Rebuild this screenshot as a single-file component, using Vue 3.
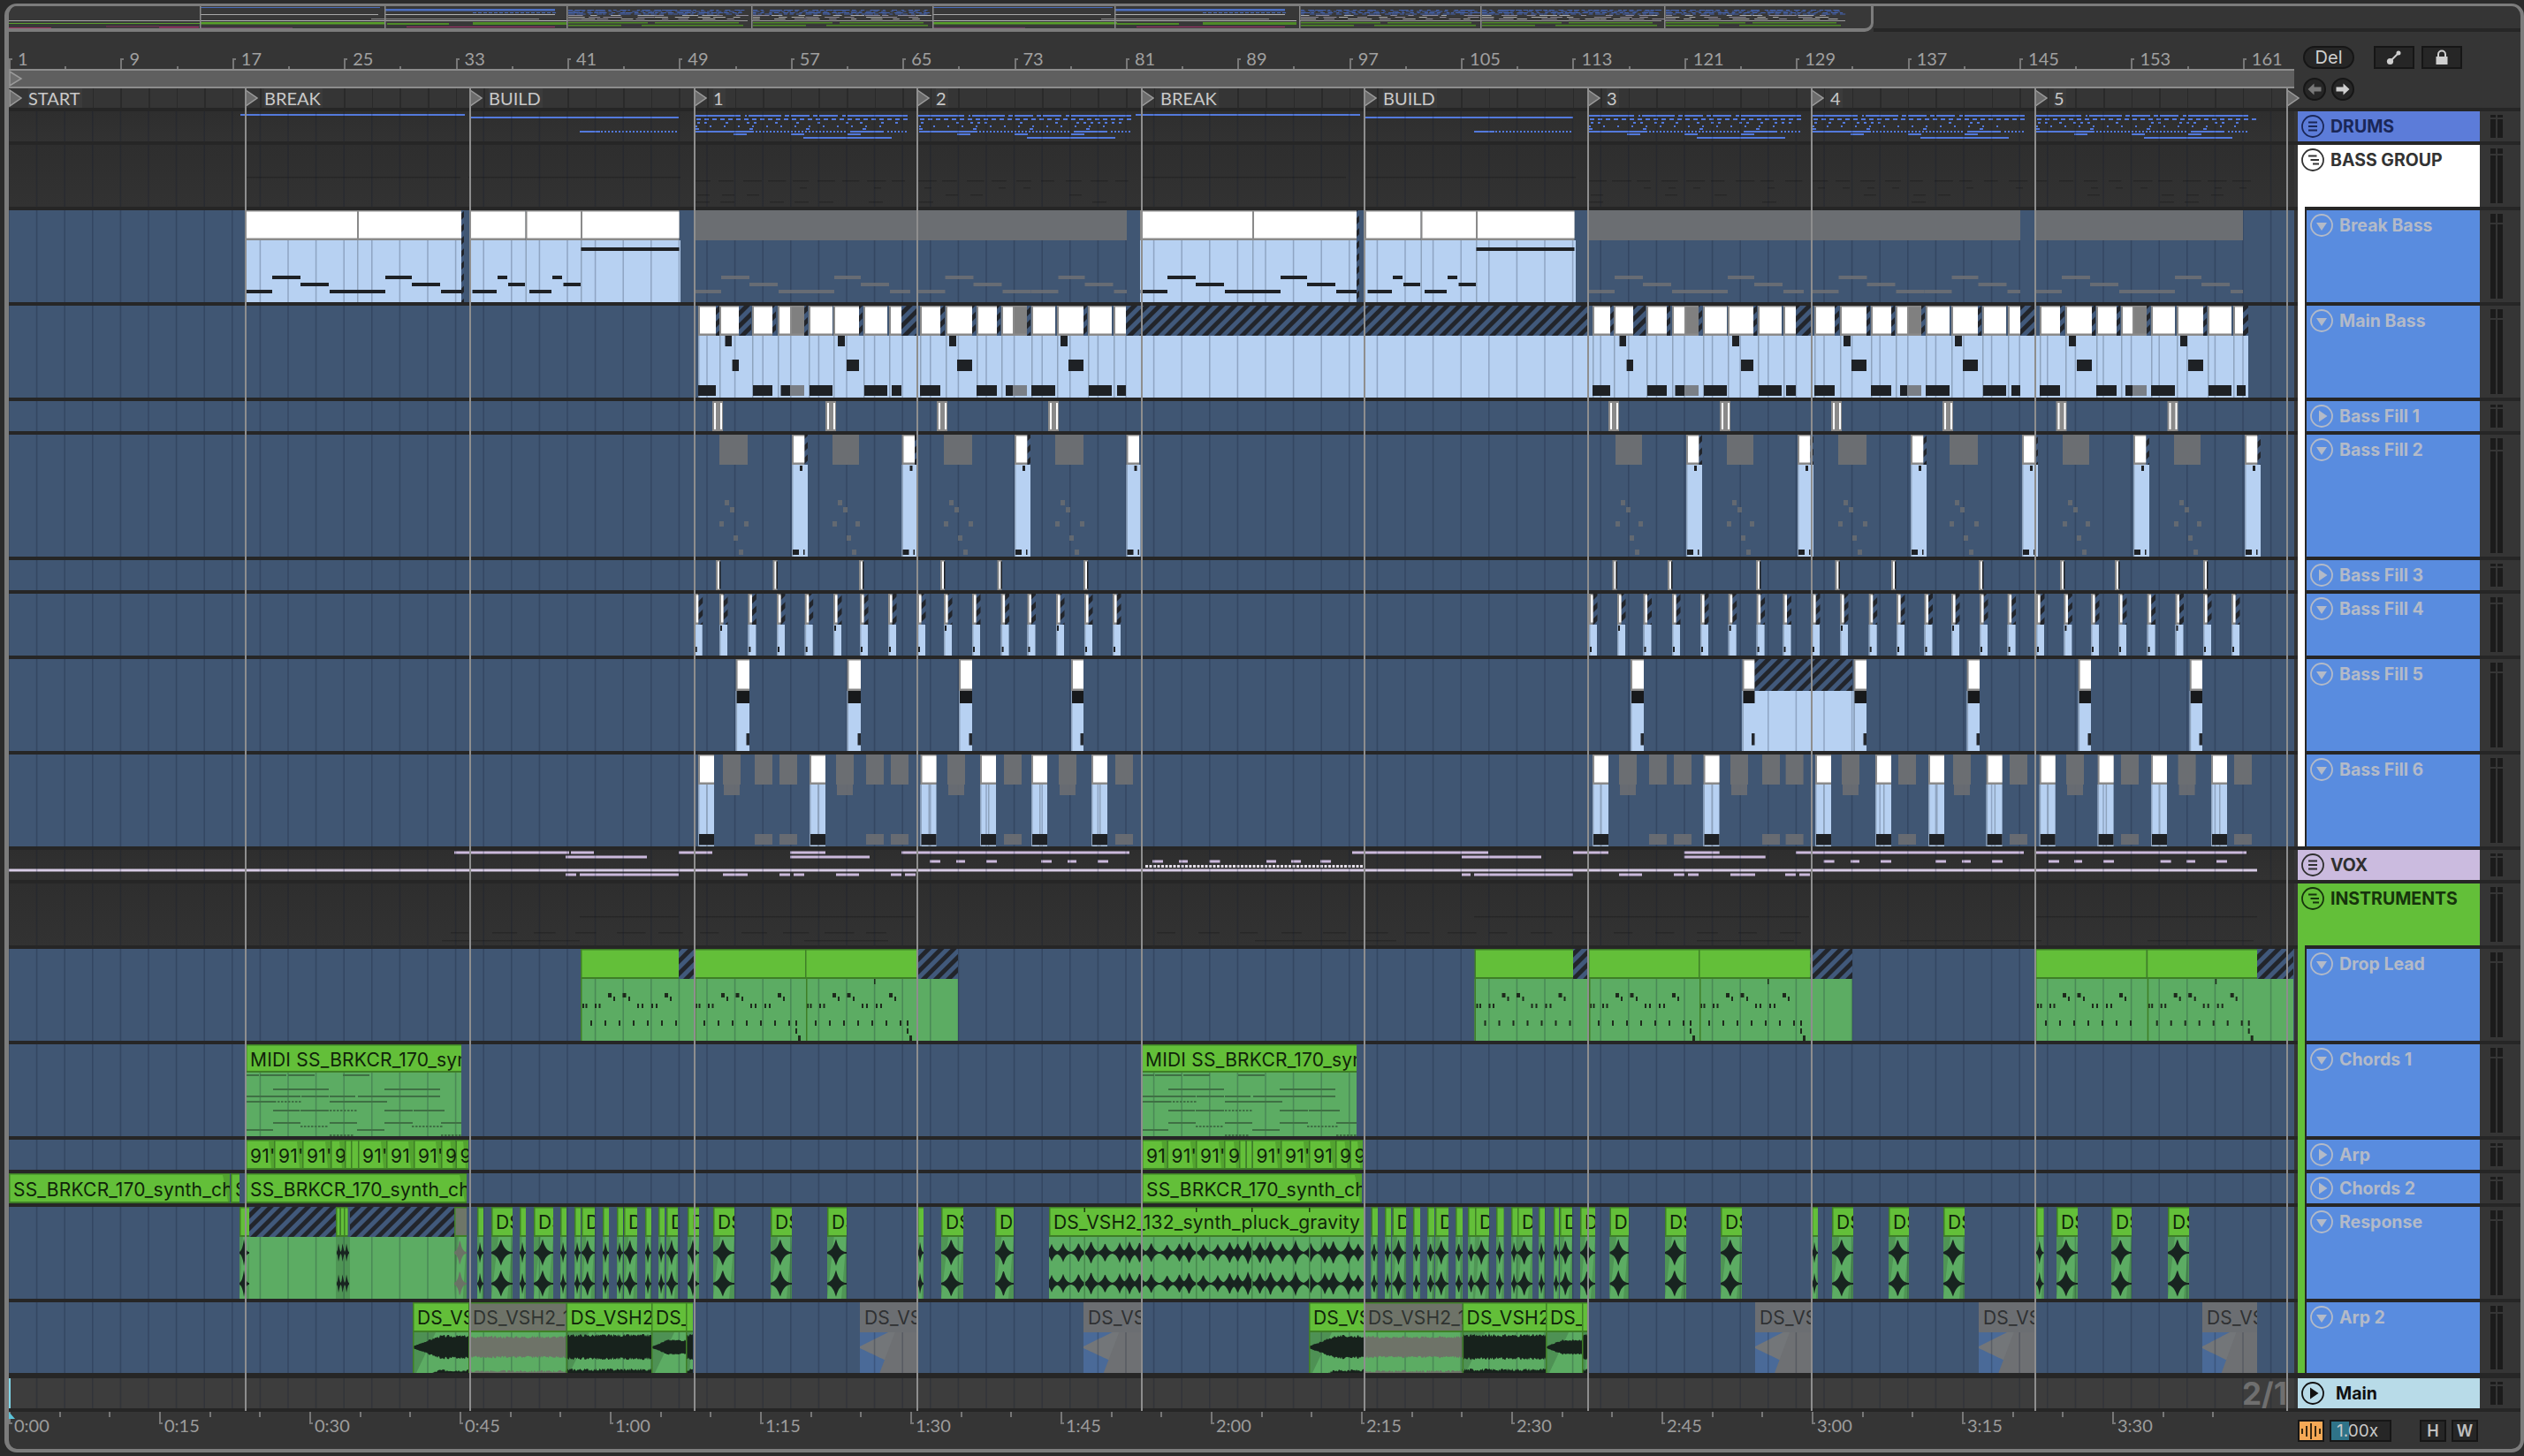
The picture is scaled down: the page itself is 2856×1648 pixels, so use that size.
<script setup>
const GRID = 31.6;
const LB = '#b7d1f2';
const GREEN = '#63bf39';
const GBODY = '#5cac63';
const GDARK = '#3f7f27';
const NOTE = '#1e2125';
const GREY = '#6b6e72';
const NAME = 'DS_VSH2_132_synth_pluck_gravity';

let seed = 17;
const rnd = () => { seed = (seed * 9301 + 49297) % 233280; return seed / 233280 };

const defs = [
  ['drums', 'DRUMS', 'group', 34, '#5c7cd9', 'menu', '#1a2758'],
  ['bass', 'BASS GROUP', 'group', 70, '#ffffff', 'open', '#333333', '#ffffff'],
  ['break', 'Break Bass', 'child', 104, '#598cdf', 'down', '', '#ffffff'],
  ['main', 'Main Bass', 'child', 104, '#598cdf', 'down', '', '#ffffff'],
  ['f1', 'Bass Fill 1', 'child', 34, '#598cdf', 'right', '', '#ffffff'],
  ['f2', 'Bass Fill 2', 'child', 138, '#598cdf', 'down', '', '#ffffff'],
  ['f3', 'Bass Fill 3', 'child', 34, '#598cdf', 'right', '', '#ffffff'],
  ['f4', 'Bass Fill 4', 'child', 70, '#598cdf', 'down', '', '#ffffff'],
  ['f5', 'Bass Fill 5', 'child', 104, '#598cdf', 'down', '', '#ffffff'],
  ['f6', 'Bass Fill 6', 'child', 104, '#598cdf', 'down', '', '#ffffff', true],
  ['vox', 'VOX', 'group', 34, '#cbbbdf', 'menu', '#2f2f2f'],
  ['inst', 'INSTRUMENTS', 'group', 70, '#63bf39', 'open', '#16340c', '#63bf39'],
  ['lead', 'Drop Lead', 'child', 104, '#598cdf', 'down', '', '#63bf39'],
  ['ch1', 'Chords 1', 'child', 104, '#598cdf', 'down', '', '#63bf39'],
  ['arp', 'Arp', 'child', 34, '#598cdf', 'right', '', '#63bf39'],
  ['ch2', 'Chords 2', 'child', 34, '#598cdf', 'right', '', '#63bf39'],
  ['resp', 'Response', 'child', 104, '#598cdf', 'down', '', '#63bf39'],
  ['arp2', 'Arp 2', 'child', 80, '#598cdf', 'down', '', '#63bf39', true, 6],
  ['master', 'Main', 'master', 34, '#b8dbe8', 'play', '#111111'],
];

const B = {};
defs.forEach(d => { B[d[0]] = { under: [], over: [], titles: [] } });
const r = (list, x, y, w, h, f) => list.push({ x, y, w, h, f });
const p = (list, d, f) => list.push({ d, f });
const u = (k, x, y, w, h, f) => r(B[k].under, x, y, w, h, f);
const o = (k, x, y, w, h, f) => r(B[k].over, x, y, w, h, f);
const fit = (text, w) => text.slice(0, Math.max(1, Math.ceil((w - 6) / 11)));
const title = (k, text, x, w, y, h, color) => B[k].titles.push({ text: fit(text, w), x, w, y, h, color });
const hatch = (k, x, y, w, h) => o(k, x, y, w, h, 'url(#hatch)');

function bTitle(k, x, w, top, bot, fill = '#ffffff') {
  o(k, x, top, w, bot - top, '#8a8a8a');
  o(k, x + 2, top + 1.5, Math.max(w - 2, 0.5), bot - top - 4, fill);
}
function gTitle(k, x, w, top, bot, fill = GREEN) {
  o(k, x, top, w, bot - top, GDARK);
  o(k, x + 1.5, top + 1.5, Math.max(w - 1.5, 0.5), bot - top - 3.5, fill);
}
function wave(list, x, w, cy, amp, f) {
  const top = [];
  const bot = [];
  const n = Math.max(2, Math.ceil(w));
  for (let i = 0; i <= n; i++) {
    const px = x + (i * w) / n;
    const a = amp(i / n, i);
    top.push(px.toFixed(1) + ' ' + (cy - a).toFixed(1));
    bot.unshift(px.toFixed(1) + ' ' + (cy + a * 0.95).toFixed(1));
  }
  p(list, 'M' + top.join('L') + 'L' + bot.join('L') + 'Z', f);
}
const spindle = A => t => A * Math.max(0.07, Math.exp(-Math.abs(t - 0.45) / 0.17));

/* DRUMS */
const BLUE = '#5379dc';
[785, 1038, 1796, 2049, 2302].forEach((s, idx) => {
  const end = idx === 4 ? 252 : 249;
  [[1, 53], [58, 60], [62, 99], [103, 108], [110, 131], [135, 140], [142, 163], [168, 172], [174, 242]].forEach(a => u('drums', s + a[0], 130, a[1] - a[0], 2, BLUE));
  for (let i = 3; i < end - 4; i += 9) u('drums', s + i, 134, 5, 2, BLUE);
  for (let i = 4; i < end - 20; i += 8) if (rnd() > 0.45) u('drums', s + i, 138, 3, 2, BLUE);
  for (let i = 2; i < end - 25; i += 16) u('drums', s + i, 142, 2, 2, BLUE);
  [2, 63, 127, 191].forEach(a => u('drums', s + a, 145, 4, 2, BLUE));
  u('drums', s + 2, 148, 64, 2, BLUE);
  for (let i = 66; i < 173; i += 4) u('drums', s + i, 148, 2, 2, BLUE);
  u('drums', s + 177, 148, 38, 2, BLUE);
  for (let i = 219; i < 240; i += 4) u('drums', s + i, 148, 2, 2, BLUE);
  [45, 110, 174].forEach(a => u('drums', s + a, 151, 15, 2, BLUE));
  u('drums', s + 124, 155, 100, 2, BLUE);
});
[[272, 129, 254], [531, 132, 237], [1285, 129, 254], [1543, 132, 237]].forEach(a => u('drums', a[0], a[1], a[2], 2, BLUE));
[656, 1668].forEach(s => {
  u('drums', s, 148, 23, 2, BLUE);
  for (let i = 24; i < 110; i += 4) u('drums', s + i, 148, 2, 2, BLUE);
});

/* BASS GROUP faint notes */
const FAINT = 'rgba(0,0,0,0.2)';
[[279, 242], [530, 240], [1291, 232], [1543, 240]].forEach(a => u('bass', a[0], 200, a[1], 1.5, FAINT));
[785, 1038, 1796, 2049, 2302].forEach(s => {
  for (let i = 0; i < 240; i += 28) {
    u('bass', s + i, 204, 14 + rnd() * 8, 1.5, FAINT);
    if (rnd() > 0.5) u('bass', s + i + 8, 212, 8, 1.5, FAINT);
    if (rnd() > 0.6) u('bass', s + i + 4, 220, 14, 1.5, FAINT);
    if (rnd() > 0.6) u('bass', s + i + 2, 228, 16, 1.5, FAINT);
  }
});

/* BREAK BASS */
const breakNotes = [[31, 63, 312], [63, 95, 320], [0.6, 31, 328], [96, 128, 328], [128, 159, 328], [159, 189, 312], [189, 221, 320], [222, 245, 328]];
[0, 1013].forEach(off => {
  u('break', 277 + off, 272, 248, 70, LB);
  u('break', 531 + off, 272, 239, 70, LB);
  hatch('break', 522 + off, 238, 3, 104);
  [[277, 127], [404, 118], [531, 63.5], [594.5, 62.5], [657, 111.5]].forEach(a => bTitle('break', a[0] + off, a[1], 238, 272));
  [404, 594.5, 657].forEach(a => o('break', a + off, 272, 1.5, 70, '#8ea3bd'));
  breakNotes.forEach(n => o('break', 277 + off + n[0], n[2], n[1] - n[0], 4, NOTE));
  [[563, 574, 312], [575, 594, 320], [534.5, 562, 328], [599, 624, 328], [625, 636, 312], [637.5, 657, 320], [657.5, 768.5, 280]].forEach(n => o('break', n[0] + off, n[2], n[1] - n[0], 4, NOTE));
});
[[785, 1275], [1796, 2286], [2302, 2538]].forEach(a => {
  o('break', a[0], 238, a[1] - a[0], 34, GREY);
  for (let s = a[0]; s < a[1]; s += 253.5) {
    breakNotes.forEach(n => {
      const x0 = s + n[0];
      const x1 = Math.min(s + n[1], a[1]);
      if (x1 > x0) o('break', x0, n[2], x1 - x0, 4, 'rgba(110,112,116,0.85)');
    });
  }
});

/* MAIN BASS */
const unitA = {
  white: [[0, 20], [24, 46], [61, 84], [90, 104], [125, 152], [153, 182], [187, 214], [216, 230]],
  grey: [104, 120],
  hatch: [[20, 24], [46, 60], [84, 88], [120, 124], [182, 186], [230, 247]],
  top: [[30.5, 38], [158, 166]],
  mid: [[38.6, 46], [168, 182]],
  low: [[0, 20], [62, 84], [93.5, 104], [126, 152], [188, 214], [219, 230]],
};
const unitB = {
  white: [[0, 23], [29, 59], [64, 87], [92, 105], [126, 153], [155, 185], [190, 217], [219, 233]],
  grey: [105, 121],
  hatch: [[23, 28], [59, 63], [87, 91], [121, 125], [185, 189]],
  top: [[33, 41], [159, 167]],
  mid: [[42, 59], [168, 185]],
  low: [[0, 23], [64, 87], [97, 105], [126, 153], [191, 217], [223, 233]],
};
u('main', 790, 380, 1754, 70, LB);
[[790, unitA], [1041, unitB], [1802, unitA], [2053, unitB], [2308, unitB]].forEach(a => {
  const s = a[0];
  const U = a[1];
  U.hatch.forEach(h => hatch('main', s + h[0], 346, h[1] - h[0], 34));
  U.white.forEach(h => {
    bTitle('main', s + h[0], h[1] - h[0], 346, 380);
    o('main', s + h[0], 380, 1.5, 70, '#8ea3bd');
  });
  bTitle('main', s + U.grey[0], U.grey[1] - U.grey[0], 346, 380, '#808080');
  U.top.forEach(n => o('main', s + n[0], 380, n[1] - n[0], 12, NOTE));
  U.mid.forEach(n => o('main', s + n[0], 407, n[1] - n[0], 13, NOTE));
  U.low.forEach(n => o('main', s + n[0], 436, n[1] - n[0], 12, NOTE));
  o('main', s + U.grey[0], 436, U.grey[1] - U.grey[0], 12, '#7a7f86');
});
hatch('main', 1274, 346, 523, 34);
hatch('main', 2286, 346, 17, 34);
hatch('main', 2538, 346, 6, 34);

/* BASS FILL 1 */
[806, 934, 1060, 1186, 1820, 1946, 2072, 2198, 2326.5, 2452.5].forEach(x => {
  o('f1', x, 454, 12, 34, '#8a8a8a');
  o('f1', x + 2, 456, 2, 30, '#ffffff');
  o('f1', x + 9, 456, 2, 30, '#ffffff');
});

/* BASS FILL 2 */
[814, 942, 1068, 1194, 1828, 1954, 2080, 2206, 2334, 2460].forEach((g, i) => {
  const w = i % 4 === 1 || i === 4 || i === 8 ? 30 : 32;
  o('f2', g, 492, w, 34, GREY);
  const fa = 'rgba(108,110,112,0.8)';
  [[6, 566], [12, 574], [0, 590], [w - 4, 590], [16, 606], [22, 622]].forEach(n => o('f2', g + n[0], n[1], 5, 6, fa));
});
[896, 1020.5, 1148, 1274.5, 1908, 2034, 2162, 2288, 2414, 2540].forEach(a => {
  u('f2', a, 526, a === 1274.5 ? 16 : 18, 104, LB);
  bTitle('f2', a, 14.5, 492, 526);
  if (a !== 1274.5) hatch('f2', a + 14.5, 492, 3.5, 34);
  o('f2', a, 526, 1.5, 104, '#8ea3bd');
  o('f2', a + 9, 527, 3, 6, NOTE);
  o('f2', a + 1, 622, 7, 6, NOTE);
  o('f2', a + 13, 622, 1.5, 6, NOTE);
});

/* BASS FILL 3 */
[810, 874.5, 972, 1064, 1128.5, 1226, 1824.5, 1887, 1987, 2076.5, 2140, 2239, 2331, 2393, 2493].forEach(x => {
  o('f3', x, 634, 5, 34, '#8a8a8a');
  o('f3', x + 2, 635.5, 2, 31, '#ffffff');
  o('f3', x + 4, 635.5, 1.5, 31, NOTE);
});

/* BASS FILL 4 */
[785.7, 814, 846.4, 879, 910.7, 943, 973, 1005, 1038, 1068, 1100, 1132.6, 1162.5, 1195, 1227, 1259, 1798, 1830, 1859.5, 1892, 1924, 1955.7, 1987.6, 2017.5, 2050, 2082, 2114.7, 2146, 2177.5, 2208, 2240, 2271.6, 2304, 2335.4, 2366, 2397, 2429.6, 2461.5, 2493, 2525].forEach((x, i) => {
  u('f4', x, 707, 9, 35, LB);
  hatch('f4', x + 4, 672, 5.5, 35);
  bTitle('f4', x, 4.5, 672, 707);
  o('f4', x, 707, 1.5, 35, '#8ea3bd');
  if (i % 4 === 1) o('f4', x + 1, 708, 2, 6, NOTE);
  else o('f4', x + 1, 732, 2, 6, NOTE);
});

/* BASS FILL 5 */
function f5clip(x, w) {
  u('f5', x, 782, w, 68, LB);
  bTitle('f5', x, w, 746, 782);
  o('f5', x, 782, 1.5, 68, '#8ea3bd');
  o('f5', x + 1, 782, w - 1, 14, '#17191b');
  o('f5', x + w - 3.5, 830, 3.5, 13.5, '#24282e');
}
[[832.6, 15.4], [958.5, 15.5], [1085, 15], [1212, 14], [1845, 15], [2097.5, 14.5], [2225.6, 14.4], [2351.6, 14.4], [2477.7, 14.3]].forEach(a => f5clip(a[0], a[1]));
u('f5', 1971.5, 782, 126, 68, LB);
f5clip(1971.5, 14);
hatch('f5', 1985.5, 746, 110.5, 36);

/* BASS FILL 6 */
[[818, 'a'], [854, 'b'], [882, 'b'], [946, 'a'], [980, 'b'], [1008, 'b'], [1072, 'a'], [1136, 'b'], [1198, 'a'], [1262, 'b'], [1832, 'a'], [1866, 'b'], [1894, 'b'], [1958, 'a'], [1994, 'b'], [2020.6, 'b'], [2084, 'a'], [2148, 'b'], [2210, 'a'], [2274, 'b'], [2338, 'a'], [2400, 'b'], [2464.6, 'a'], [2528, 'b']].forEach(a => {
  o('f6', a[0], 854, 20, 34, GREY);
  if (a[1] === 'a') o('f6', a[0] + 1, 888, 18, 12, 'rgba(107,110,114,0.9)');
  else o('f6', a[0], 944, 20, 12, 'rgba(107,110,114,0.9)');
});
[790, 916, 1041.5, 1109, 1167, 1235, 1802, 1927.5, 2054, 2122, 2182, 2247.6, 2307.7, 2373.6, 2434, 2502].forEach(a => {
  u('f6', a, 888, 18, 70, LB);
  bTitle('f6', a, 18, 854, 888);
  o('f6', a, 888, 1.5, 70, '#8ea3bd');
  o('f6', a + 9, 888, 1.5, 70, '#8ea3bd');
  o('f6', a + 1, 944, 17, 12.5, NOTE);
});

/* VOX */
const LIL = '#cbb9dc';
const vox = {
  '963.5': [[514, 130], [646, 26], [768, 38], [894, 40], [1020, 258], [1530, 154], [1780, 40], [1905.7, 40], [2032, 258], [2303, 239]],
  '968.5': [[640, 92], [894, 90], [1654, 90], [1905.7, 92]],
  '973.5': [[1052, 12], [1082, 10], [1116, 12], [1178, 12], [1208, 10], [1242, 12], [1304, 12], [1334, 10], [1368.5, 12], [1433, 11], [1461, 11], [1494, 12], [2063.6, 12], [2094, 10], [2128, 12], [2190, 12], [2220, 10], [2254, 12], [2318, 12], [2347, 9], [2380, 12], [2444.6, 12], [2474, 10], [2508, 12]],
  '988.5': [[640, 12], [656, 112], [818, 28], [882, 12], [898, 12], [946, 26], [1008, 12], [1024, 12], [1654, 10], [1668, 112], [1832, 26], [1894, 12], [1910, 12], [1958, 28], [2020, 12], [2036, 12]],
};
Object.keys(vox).forEach(y => vox[y].forEach(a => u('vox', a[0], +y, a[1], 3, LIL)));
u('vox', 10, 983.5, 2544, 3, '#d8cce6');
for (let x = 1296; x < 1541; x += 4.5) u('vox', x, 979, 3, 3, '#e6e0ea');

/* INSTRUMENTS faint */
[[656, 112], [785, 250], [1668, 112], [1797, 250], [2303, 251]].forEach(a => u('inst', a[0], 1037, a[1], 1.5, FAINT));
for (let x = 510; x < 2060; x += 47) if (x < 1000 || x > 1290) u('inst', x, 1055, 20 + rnd() * 14, 1.5, FAINT);
[[500, 156], [910, 95], [1420, 160], [1920, 110], [2150, 160], [2430, 120]].forEach(a => u('inst', a[0], 1064, a[1], 1.5, FAINT));

/* DROP LEAD */
function leadUnit(s, extra) {
  [[31, 1126], [47.5, 1126], [95, 1126]].forEach(n => o('lead', s + n[0], n[1] - 2, 4, 5, '#1e2a1c'));
  [[37, 1130], [54, 1130], [101, 1130]].forEach(n => o('lead', s + n[0], n[1] - 2, 2, 5, '#1e2a1c'));
  [2, 5.5, 16, 20.5, 64, 69, 80, 85].forEach(n => o('lead', s + n, 1136, 2, 5, '#1e2a1c'));
  for (let k = 0; k < 7; k++) o('lead', s + 11 + k * 16, 1155, 2, 6, '#1e2a1c');
  if (extra) {
    o('lead', s + 115, 1155, 2, 6, '#1e2a1c');
    o('lead', s + 115, 1164, 2, 6, '#1e2a1c');
    o('lead', s + 118, 1172, 3, 6, '#1e2a1c');
  }
}
[
  { body: [657, 1084], t: [[657, 111], [785, 126], [911, 126]], h: [[768, 17], [1037, 47]], u: [657, 785, 911] },
  { body: [1668.5, 2096], t: [[1668.5, 111.5], [1797, 125], [1922, 126.6]], h: [[1780, 17], [2048.6, 47.4]], u: [1668.5, 1797, 1922] },
  { body: [2303, 2595], t: [[2303, 125.7], [2428.7, 125.3]], h: [[2554, 41]], u: [2303, 2428.7] },
].forEach(c => {
  u('lead', c.body[0], 1108, c.body[1] - c.body[0], 70, GBODY);
  u('lead', c.body[0], 1108, 1.5, 70, GDARK);
  c.t.forEach(a => gTitle('lead', a[0], a[1], 1074, 1108));
  c.h.forEach(a => hatch('lead', a[0], 1074, a[1], 34));
  c.u.forEach((s, i) => {
    leadUnit(s, i > 0);
    if (i > 0) o('lead', s + 1, 1108, 1.5, 70, GDARK);
    if (i === c.u.length - 1) o('lead', s + 78, 1108, 1.5, 6, '#1e2a1c');
  });
});

/* CHORDS 1 */
const NG = '#3f7044';
[0, 1013].forEach(off => {
  const k = 'ch1';
  u(k, 278 + off, 1214, 244, 72, GBODY);
  gTitle(k, 278 + off, 244, 1182, 1214);
  title(k, 'MIDI SS_BRKCR_170_synth', 278 + off, 244, 1182, 32, '#10240a');
  const notes = {
    '1216': [[278, 15], [294, 30], [326, 30], [388, 30]],
    '1232': [[309, 63], [435, 63]],
    '1240': [[278, 62], [341, 31], [373, 29], [405, 63], [468, 30]],
    '1246': [[278, 32], [373, 65]],
    '1256': [[309, 30], [340, 32], [435, 32], [468, 35]],
    '1270': [[309, 31], [373, 31], [435, 32], [499, 23]],
    '1278': [[278, 31], [404, 31]],
  };
  Object.keys(notes).forEach(y => notes[y].forEach(a => o(k, a[0] + off, +y, a[1], 2, NG)));
  [[310, 32, 1246], [373, 32, 1256], [340, 32, 1274], [466, 33, 1274], [373, 28, 1284], [499, 23, 1284]].forEach(a => {
    for (let x = a[0]; x < a[0] + a[1]; x += 4) o(k, x + off, a[2], 2.5, 2, NG);
  });
});

/* ARP */
const arpUnits = [
  [278, [[278, 32, "91'"], [310, 32, "91'"], [342, 32, "91'"], [374, 16, '9'], [390, 7, ''], [397, 8, ''], [405, 32, "91'"], [437, 31, '91'], [468, 31, "91'"], [499, 16.5, '9'], [515.5, 14.5, '9']]],
  [1292, [[1292, 28.5, '91'], [1320.5, 32.5, "91'"], [1353, 32, "91'"], [1385, 17, '9'], [1402, 7.5, ''], [1409.5, 7, ''], [1416.5, 32.5, "91'"], [1449, 32, "91'"], [1481, 30, '91'], [1511, 16.5, '9'], [1527.5, 14.5, '9']]],
];
arpUnits.forEach(g => g[1].forEach(a => {
  gTitle('arp', a[0], a[1], 1290, 1324);
  if (a[1] > 10) p(B.arp.over, `M${a[0] + a[1] - 6} 1292L${a[0] + a[1]} 1292L${a[0] + a[1]} 1322L${a[0] + a[1] - 3} 1322Z`, '#52a32f');
  if (a[2]) title('arp', a[2], a[0], a[1], 1290, 34, '#10240a');
}));

/* CHORDS 2 */
[[10, 250, 'SS_BRKCR_170_synth_chords'], [261, 10, 'SS_BRKCR'], [278, 250, 'SS_BRKCR_170_synth_chords'], [1292, 249, 'SS_BRKCR_170_synth_chords']].forEach(a => {
  gTitle('ch2', a[0], a[1], 1328, 1362);
  if (a[1] > 20) p(B.ch2.over, `M${a[0] + a[1] - 8} 1330L${a[0] + a[1]} 1330L${a[0] + a[1]} 1360L${a[0] + a[1] - 2} 1360Z`, '#52a32f');
  title('ch2', a[2], a[0], a[1], 1328, 34, '#10240a');
});

/* RESPONSE */
const WV = '#182420';
function respClip(x0, x1, grey) {
  const w = x1 - x0;
  u('resp', x0, 1400, w, 70, GBODY);
  p(B.resp.under, `M${x0} 1400L${x0 + Math.min(w * 0.35, 8)} 1400L${x0} 1470Z`, '#4f9555');
  p(B.resp.under, `M${x1} 1400L${x1} 1470L${x1 - Math.min(w * 0.3, 6)} 1470Z`, '#4f9555');
  gTitle('resp', x0, w, 1366, 1400, grey ? '#6e7668' : GREEN);
  if (w > 11 && !grey) title('resp', NAME, x0, w, 1366, 32, '#10240a');
  const amp = w < 10 ? 14 : 16;
  wave(B.resp.over, x0, w, 1418, spindle(amp), grey ? '#6b7266' : WV);
  wave(B.resp.over, x0, w, 1453, spindle(amp), grey ? '#6b7266' : WV);
}
[[271, 282], [540, 547], [556, 580], [588, 595], [604, 626], [634, 641], [650, 657], [658, 673], [682, 689], [698, 705], [706, 721], [730, 737], [745, 752], [754, 767], [778, 791], [807, 831], [872, 896], [936, 958], [1038, 1045], [1065, 1090], [1126, 1147], [1551.5, 1559], [1567, 1574], [1575.5, 1591], [1599, 1607], [1615, 1623], [1624, 1639], [1647, 1655], [1661, 1669], [1669, 1685], [1693, 1701.5], [1710, 1717], [1717, 1734], [1741, 1748], [1758, 1764], [1765, 1779], [1788, 1805], [1821.5, 1843], [1884, 1908], [1947, 1971], [2050, 2057], [2073, 2097], [2137, 2160], [2199, 2223], [2304, 2312.5], [2327, 2351], [2389, 2412], [2453, 2477]].forEach(a => respClip(a[0], a[1]));
u('resp', 282, 1400, 232, 70, GBODY);
u('resp', 380, 1400, 16, 70, '#4f9555');
hatch('resp', 282, 1366, 98, 34);
hatch('resp', 396, 1366, 118, 34);
[380, 384.5, 389].forEach(x => gTitle('resp', x, 4.5, 1366, 1400));
[381, 385.5, 390].forEach(x => {
  wave(B.resp.over, x, 5, 1418, spindle(14), WV);
  wave(B.resp.over, x, 5, 1453, spindle(14), WV);
});
respClip(514, 528, true);

/* Response: long pluck clip */
const peaks = [];
for (let pos = 3; pos < 356; pos += 9 + rnd() * 11) peaks.push([pos, 10 + rnd() * 5]);
const bigAmp = (t, i) => {
  let a = 1;
  peaks.forEach(k => { a = Math.max(a, k[1] * Math.exp(-Math.abs(i - k[0]) / 3.4)); });
  return a;
};
u('resp', 1187, 1400, 356, 70, GBODY);
gTitle('resp', 1187, 356, 1366, 1400);
title('resp', NAME, 1187, 356, 1366, 32, '#10240a');
wave(B.resp.over, 1187, 356, 1418, bigAmp, WV);
wave(B.resp.over, 1187, 356, 1453, bigAmp, WV);
[1226.5, 1353, 1416, 1481].forEach(x => {
  o('resp', x, 1367, 1.5, 5, '#1e3a12');
  o('resp', x, 1400, 1.5, 70, '#47894d');
});

/* ARP 2 */
function arp2Body(x, w, shape, grey, clr = GBODY) {
  u('arp2', x, 1508, w, 46, clr);
  const f = grey ? '#6e7368' : '#17221c';
  wave(B.arp2.over, x, w, 1525, shape, f);
  wave(B.arp2.over, x, w, 1563, (t, i) => shape(t, i) * 0.95, f);
}
const fuzz = (A, rise) => (t) => {
  const env = rise ? Math.min(1, 0.08 + t * rise) : 1;
  return A * env * (0.78 + 0.22 * rnd());
};
[0, 1014].forEach(off => {
  const base = off ? [[1481, 62], [1543, 111.6], [1654.6, 94.4], [1749, 41], [1790, 6]] : [[467, 63], [530, 110.6], [640.6, 96.4], [737, 39], [776, 8]];
  base.forEach((a, i) => {
    const grey = i === 1;
    arp2Body(a[0], a[1], grey ? fuzz(13) : i === 0 ? fuzz(14, 1.9) : i === 3 ? fuzz(9, 2) : fuzz(15), grey);
    if (i !== 1) {
      p(B.arp2.under, `M${a[0]} 1508L${a[0] + Math.min(a[1], 26)} 1508L${a[0] + 4} 1554L${a[0]} 1554Z`, '#4e9154');
    }
    gTitle('arp2', a[0], a[1], 1474, 1508, grey ? '#6e7368' : GREEN);
    o('arp2', a[0], 1508, 1.5, 46, GDARK);
    const names = ['DS_VSH2_132', 'DS_VSH2_132', 'DS_VSH2_132', 'DS_VSH2_132', ''];
    if (names[i]) title('arp2', names[i], a[0], a[1], 1474, 32, grey ? '#2f3330' : '#10240a');
  });
});
[[973, 64], [1226, 65], [1986, 63], [2239, 64], [2492, 62]].forEach(a => {
  const x = a[0];
  const w = a[1];
  u('arp2', x, 1508, w, 46, '#4a6a98');
  wave(B.arp2.under, x, w, 1525, t => Math.min(17, 1 + t * 32), '#737679');
  p(B.arp2.under, `M${x + w * 0.35} 1554L${x + w * 0.62} 1508L${x + w} 1508L${x + w} 1554Z`, '#6e7073');
  o('arp2', x, 1474, w, 34, GREY);
  title('arp2', 'DS_VSH2_132', x, w, 1474, 32, '#2f3133');
});

/* Assemble rows */
let cursor = 126;
const rows = defs.map(d => {
  const h = d[3];
  const sep = d[9] || 4;
  const rowTop = cursor;
  cursor += h + sep;
  let path = '';
  for (let i = 0; i <= 81; i++) path += `M${(10 + i * GRID).toFixed(1)} ${rowTop}v${h}`;
  const data = B[d[0]];
  return {
    key: d[0], name: d[1], type: d[2], h, sep, top: rowTop,
    color: d[4], icon: d[5], textColor: d[6], strip: d[7], last: d[8],
    under: data.under, grid: path, over: data.over,
    titles: data.titles,
    box: `10 ${rowTop} 2586 ${h}`,
  };
});

/* Overview */
const ov = [];
const OV = (x, y, w, h, f) => ov.push({ x, y, w, h, f });
const marks = [226, 435, 641, 850, 1055, 1261, 1470, 1675, 1883];
OV(10, 23, 216, 1, '#a8a8a8');
OV(10, 26, 216, 1, '#5b9e2f');
OV(10, 31, 48, 1, '#9a3060');
OV(120, 29.5, 60, 1, '#7d3058');
OV(180, 30, 45, 1.5, '#a03068');
function ovBreak(s) {
  OV(s, 8, 204, 1, '#4a6db8');
  OV(s, 16, 202, 1, '#a8a8a8');
  OV(s, 23, 209, 1, '#b5b5b5');
  OV(s, 25, 209, 2.5, '#58a02a');
  OV(s, 31, 105, 1, '#6a4060');
}
function ovBuild(s) {
  OV(s, 10, 193, 2.5, '#4d6fc0');
  for (let x = s + 100; x < s + 193; x += 6) OV(x, 14, 4, 1, '#4d6fc0');
  OV(s, 16, 193, 1, '#b0b0b0');
  OV(s - 15, 21, 190, 1, '#8f8f8f');
  OV(s, 23, 206, 1, '#b5b5b5');
  OV(s + 3, 26, 70, 2, '#4e8a28');
  OV(s + 100, 25, 106, 3, '#4e8a28');
  OV(s + 25, 30, 168, 1, '#a03068');
}
function ovDrop(s) {
  for (let y = 11; y < 16; y += 1.5) {
    for (let x = s + 2; x < s + 200; x += 5 + rnd() * 6) OV(x, y, 3 + rnd() * 5, 1, '#4563ae');
  }
  for (let y = 17; y < 23; y += 2) {
    for (let x = s + 2; x < s + 195; x += 14 + rnd() * 18) OV(x, y, 6 + rnd() * 14, 1, rnd() > 0.5 ? '#aaaaaa' : '#8f8a98');
  }
  OV(s, 23, 205, 1, '#9a9a9a');
  OV(s + 2, 25, 90, 1.5, '#4e8a28');
  OV(s + 100, 25, 95, 1.5, '#4e8a28');
  OV(s + 2, 28, 60, 1.5, '#4e8a28');
  OV(s + 85, 28, 115, 1.5, '#4e8a28');
}
ovBreak(226); ovBuild(435); ovDrop(641); ovDrop(850);
ovBreak(1055); ovBuild(1261); ovDrop(1470); ovDrop(1675); ovDrop(1883);
marks.forEach(x => OV(x, 7, 1.5, 25, '#8a8a8a'));

const bars = Array.from({ length: 21 }, (_, i) => 1 + i * 8);
const times = ['0:00', '0:15', '0:30', '0:45', '1:00', '1:15', '1:30', '1:45', '2:00', '2:15', '2:30', '2:45', '3:00', '3:15', '3:30'];
const locators = [
  { x: 10, t: 'START' }, { x: 277, t: 'BREAK' }, { x: 531, t: 'BUILD' }, { x: 785, t: '1' }, { x: 1037, t: '2' },
  { x: 1291, t: 'BREAK' }, { x: 1543, t: 'BUILD' }, { x: 1796, t: '3' }, { x: 2049, t: '4' }, { x: 2302, t: '5' }, { x: 2587, t: '' },
];
const lines = locators.slice(1);
</script>

<template>
  <div class="app">
    <svg class="defs" width="0" height="0" aria-hidden="true">
      <defs>
        <pattern id="hatch" patternUnits="userSpaceOnUse" width="10" height="10" patternTransform="rotate(45)">
          <rect width="10" height="10" fill="#41597b" />
          <rect width="5" height="10" fill="#22252b" />
        </pattern>
      </defs>
    </svg>
    <div class="frame">
      <div class="overview-bar">
        <div class="overview">
          <svg width="2119" height="25" viewBox="0 7 2119 25">
            <rect v-for="(s, i) in ov" :key="i" :x="s.x" :y="s.y" :width="s.w" :height="s.h" :fill="s.f" />
          </svg>
        </div>
        <div class="overview-rest"></div>
      </div>

      <div class="head-area">
        <div class="timeline-head">
          <div class="ruler">
            <div v-for="b in bars" :key="b" class="bar-cell"><span>{{ b }}</span></div>
          </div>
          <div class="scrub">
            <svg width="16" height="18" viewBox="0 0 16 18">
              <path d="M1 1L14 9L1 17Z" fill="#6e6e6e" stroke="#9a9a9a" stroke-width="1.5" />
            </svg>
          </div>
          <div class="locators">
            <div v-for="l in locators" :key="l.x" class="locator" :style="{ left: l.x - 10 + 'px' }">
              <svg width="15" height="22" viewBox="0 0 15 22">
                <path d="M1 2L14 11L1 20Z" fill="#6c6c6c" stroke="#9c9c9c" stroke-width="1.5" />
              </svg>
              <span v-if="l.t" class="locator-text">{{ l.t }}</span>
            </div>
          </div>
        </div>
        <div class="buttons">
          <div class="btn-line">
            <div class="pill">Del</div>
            <div class="square first">
              <svg width="18" height="18" viewBox="0 0 18 18">
                <path d="M4 14L14 4" stroke="#cfcfcf" stroke-width="2" />
                <circle cx="4.5" cy="13.5" r="3.6" fill="#cfcfcf" />
                <circle cx="14" cy="4" r="2.5" fill="#cfcfcf" />
              </svg>
            </div>
            <div class="square">
              <svg width="18" height="18" viewBox="0 0 18 18">
                <path d="M5 8V5.5a4 4 0 0 1 8 0V8" fill="none" stroke="#cfcfcf" stroke-width="2" />
                <rect x="2.5" y="8" width="13" height="9" fill="#cfcfcf" />
              </svg>
            </div>
          </div>
          <div class="btn-line second">
            <div class="round">
              <svg width="16" height="14" viewBox="0 0 16 14"><path d="M0.5 7L7.5 0.5V4.5H15.5V9.5H7.5V13.5Z" fill="#787878" /></svg>
            </div>
            <div class="round">
              <svg width="16" height="14" viewBox="0 0 16 14"><path d="M15.5 7L8.5 0.5V4.5H0.5V9.5H8.5V13.5Z" fill="#cfcfcf" /></svg>
            </div>
          </div>
        </div>
      </div>

      <div class="tracks">
        <div v-for="t in rows" :key="t.key" class="row" :class="'row-' + t.type" :style="{ height: t.h + t.sep + 'px' }">
          <div class="lane" :class="t.type === 'master' ? 'lane-master' : t.type === 'group' ? 'lane-group' : 'lane-track'" :style="{ height: t.h + 'px' }">
            <svg class="lane-svg" width="2586" :height="t.h" :viewBox="t.box">
              <template v-for="(s, i) in t.under" :key="'u' + i">
                <rect v-if="s.w" :x="s.x" :y="s.y" :width="s.w" :height="s.h" :fill="s.f" />
                <path v-else :d="s.d" :fill="s.f" />
              </template>
              <path :d="t.grid" stroke="rgba(16,26,44,0.24)" stroke-width="1.5" fill="none" />
              <template v-for="(s, i) in t.over" :key="'o' + i">
                <rect v-if="s.w" :x="s.x" :y="s.y" :width="s.w" :height="s.h" :fill="s.f" />
                <path v-else :d="s.d" :fill="s.f" />
              </template>
            </svg>
            <div
              v-for="(c, i) in t.titles"
              :key="i"
              class="clip-title"
              :style="{ left: c.x - 10 + 'px', top: c.y - t.top + 'px', width: c.w + 'px', height: c.h + 'px', lineHeight: c.h + 'px', color: c.color }"
            >{{ c.text }}</div>
            <div v-if="t.type === 'master'" class="signature">2/1</div>
          </div>
          <div class="spacer" :style="{ height: t.h + 'px' }"></div>
          <div class="head" :class="{ strip: t.strip, last: t.last }" :style="{ '--strip': t.strip, '--sep': t.sep + 'px' }">
            <div
              class="head-fill"
              :class="{ 'is-child': t.type === 'child', 'is-group': t.type !== 'child' }"
              :style="{ height: t.h + 'px', background: t.color, color: t.textColor || '#b3bac8' }"
            >
              <svg class="icon" width="26" height="26" viewBox="0 0 26 26">
                <circle cx="13" cy="13" r="12" fill="none" stroke="currentColor" stroke-width="1.8" />
                <path v-if="t.icon === 'menu'" d="M8 8.5H18M8 13H18M8 17.5H18" stroke="currentColor" stroke-width="2" />
                <path v-if="t.icon === 'open'" d="M8 8.5H17.5M10.5 13H20M13 17.5H20" stroke="currentColor" stroke-width="2" />
                <path v-if="t.icon === 'down'" d="M7 10H19L13 19Z" fill="currentColor" />
                <path v-if="t.icon === 'right'" d="M10 6.5L19.5 13L10 19.5Z" fill="currentColor" />
                <path v-if="t.icon === 'play'" d="M10 6.5L19.5 13L10 19.5Z" fill="currentColor" />
              </svg>
              <span class="name" :class="{ 'name-master': t.type === 'master' }">{{ t.name }}</span>
            </div>
          </div>
          <div class="spacer" :style="{ height: t.h + 'px' }"></div>
          <div class="meter" :style="{ height: t.h + 'px' }">
            <div v-for="n in 2" :key="n" class="meter-bar">
              <div class="seg-top"></div>
              <div class="seg-main"></div>
            </div>
          </div>
        </div>
      </div>

      <div class="footer">
        <div class="time-ruler">
          <div v-for="t in times" :key="t" class="time-cell"><span>{{ t }}</span></div>
        </div>
        <div class="footer-controls">
          <div class="audio-btn">
            <svg width="24" height="20" viewBox="0 0 24 20">
              <path d="M2 7v6M7 4v12M12 1v18M17 4v12M22 7v6" stroke="#3a2a12" stroke-width="2" />
            </svg>
          </div>
          <div class="speed"><span class="speed-fill"></span><span class="speed-text">1.00x</span></div>
          <div class="key first">H</div>
          <div class="key">W</div>
        </div>
      </div>

      <div v-for="l in lines" :key="l.x" class="loc-line" :style="{ left: l.x - 10 + 'px' }"></div>
      <div class="play-line"></div>
      <div class="play-tip"></div>
    </div>
  </div>
</template>

<style>
html, body { margin: 0; padding: 0; background: #2b2b2b; }
</style>

<style scoped>
.app {
  width: 2856px;
  height: 1648px;
  box-sizing: border-box;
  padding: 4px 0 4px 5px;
  background: #2b2b2b;
  font-family: Inter, "Liberation Sans", sans-serif;
  overflow: hidden;
}
.defs { position: absolute; }
.frame {
  position: relative;
  height: 1640px;
  box-sizing: border-box;
  border: solid #7c7c7c;
  border-width: 3px 4px 4px 5px;
  border-radius: 14px;
  background: #353535;
  display: flex;
  flex-direction: column;
  overflow: hidden;
}
.overview-bar { display: flex; height: 29px; flex: none; }
.overview {
  width: 2107px;
  height: 25px;
  flex: none;
  border-bottom: 4px solid #7c7c7c;
  border-right: 3px solid #7c7c7c;
  border-bottom-right-radius: 10px;
  background: #383838;
  overflow: hidden;
}
.overview svg { display: block; margin-left: -10px; }
.overview-rest { flex: 1; border-bottom: 4px solid #262626; height: 25px; }

.head-area { display: flex; height: 86px; flex: none; }
.timeline-head { width: 2586px; flex: none; display: flex; flex-direction: column; }
.ruler { display: flex; height: 42px; flex: none; overflow: hidden; }
.bar-cell {
  width: 126.4px;
  flex: none;
  box-sizing: border-box;
  position: relative;
  padding: 18px 0 0 10px;
  color: #a0a0a0;
  font-size: 20px;
  line-height: 24px;
  font-family: Lato, Inter, sans-serif;
}
.bar-cell::before {
  content: "";
  position: absolute;
  left: 0;
  bottom: 0;
  height: 12px;
  width: 4px;
  box-sizing: border-box;
  border-left: 2px solid #777;
  border-top: 2px solid #777;
}
.bar-cell::after {
  content: "";
  position: absolute;
  left: 50%;
  bottom: 0;
  height: 3px;
  width: 2px;
  background: #777;
}
.scrub {
  height: 18px;
  flex: none;
  border: solid #8c8c8c;
  border-width: 2px 0;
  background: #5f5f5f;
  display: flex;
  align-items: center;
}
.scrub svg { display: block; }
.locators {
  position: relative;
  height: 22px;
  flex: none;
  background: repeating-linear-gradient(90deg, #2a2a2a 0 1.5px, #353535 1.5px 31.6px);
}
.locator { position: absolute; top: 0; display: flex; height: 22px; }
.locator svg { display: block; }
.locator-text {
  margin-left: 7px;
  padding-right: 2px;
  background: #3b3b3b;
  color: #c9c9c9;
  font-size: 20px;
  line-height: 22px;
  font-family: Lato, Inter, sans-serif;
}

.buttons { flex: 1; padding: 16px 0 0 10px; box-sizing: border-box; }
.btn-line { display: flex; align-items: center; }
.btn-line.second { margin-top: 10px; gap: 6px; }
.pill {
  width: 58px;
  height: 26px;
  box-sizing: border-box;
  border-radius: 13px;
  background: #262626;
  border: 2px solid #161616;
  color: #cfcfcf;
  font-size: 20px;
  line-height: 22px;
  text-align: center;
}
.square {
  width: 46px;
  height: 26px;
  margin-left: 8px;
  box-sizing: border-box;
  background: #262626;
  border: 2px solid #161616;
  display: flex;
  align-items: center;
  justify-content: center;
}
.square.first { margin-left: 22px; }
.round {
  width: 26px;
  height: 26px;
  box-sizing: border-box;
  border-radius: 50%;
  background: #262626;
  border: 2px solid #161616;
  display: flex;
  align-items: center;
  justify-content: center;
}

.tracks { border-top: 4px solid #262626; flex: none; }
.row {
  display: flex;
  align-items: flex-start;
  background: #262626;
}
.lane { width: 2586px; flex: none; position: relative; overflow: hidden; }
.lane-track { background: #405673; }
.lane-group { background: linear-gradient(#2e2e2e, #323232); }
.lane-master { background: #3d3d3d; }
.lane-svg { display: block; position: absolute; left: 0; top: 0; }
.clip-title {
  position: absolute;
  box-sizing: border-box;
  padding: 2px 0 0 5px;
  overflow: hidden;
  white-space: nowrap;
  font-size: 21px;
  letter-spacing: 0.2px;
  font-family: Inter, sans-serif;
}
.signature {
  position: absolute;
  left: 2527px;
  top: 0;
  font-size: 35px;
  font-weight: 700;
  line-height: 34px;
  color: #6f6f6f;
}
.spacer { width: 4px; flex: none; background: #353535; }
.head { width: 206px; height: 100%; flex: none; position: relative; }
.head.strip::before {
  content: "";
  position: absolute;
  left: 0;
  top: 0;
  bottom: 0;
  width: 8px;
  background: var(--strip);
}
.head.strip.last::before { bottom: var(--sep); }
.head-fill {
  position: relative;
  display: flex;
  align-items: flex-start;
  box-sizing: border-box;
  padding: 4px 0 0 4px;
}
.head-fill.is-child { margin-left: 10px; }
.icon { flex: none; display: block; }
.name {
  margin-left: 7px;
  font-size: 19.5px;
  font-weight: 700;
  line-height: 26px;
  white-space: nowrap;
}
.name-master { margin-left: 13px; }
.meter {
  width: 42px;
  flex: none;
  box-sizing: border-box;
  background: #353535;
  padding: 4px 0 4px 8px;
  display: flex;
  gap: 2px;
}
.meter-bar { width: 6px; display: flex; flex-direction: column; gap: 2px; }
.seg-top { flex: 0 0 10%; background: #1b1b1b; }
.seg-main { flex: 1; background: #1b1b1b; }

.footer { display: flex; height: 42px; flex: none; position: relative; }
.time-ruler { width: 2590px; flex: none; display: flex; overflow: hidden; }
.time-cell {
  width: 170px;
  flex: none;
  box-sizing: border-box;
  position: relative;
  padding: 2px 0 0 6px;
  color: #9c9c9c;
  font-size: 20px;
  line-height: 26px;
  font-family: Lato, Inter, sans-serif;
  background:
    linear-gradient(#777, #777) 56.6px 0 / 2px 6px no-repeat,
    linear-gradient(#777, #777) 113.3px 0 / 2px 6px no-repeat;
}
.time-cell::before {
  content: "";
  position: absolute;
  left: 0;
  top: 0;
  height: 14px;
  width: 4px;
  box-sizing: border-box;
  border-left: 2px solid #777;
  border-bottom: 2px solid #777;
}
.footer-controls { flex: 1; display: flex; align-items: flex-start; padding-top: 9px; }
.audio-btn {
  width: 30px;
  height: 25px;
  box-sizing: border-box;
  background: #f5a956;
  border: 2px solid #161616;
  display: flex;
  align-items: center;
  justify-content: center;
}
.speed {
  width: 70px;
  height: 25px;
  margin-left: 6px;
  box-sizing: border-box;
  background: #262626;
  border: 2px solid #161616;
  position: relative;
  color: #c8c8c8;
  font-size: 19px;
  line-height: 21px;
}
.speed-fill { position: absolute; left: 0; top: 0; bottom: 0; width: 20px; background: #2f7388; }
.speed-text { position: relative; margin-left: 6px; }
.key {
  width: 30px;
  height: 25px;
  margin-left: 6px;
  box-sizing: border-box;
  background: #262626;
  border: 2px solid #161616;
  color: #c0c0c0;
  font-size: 18px;
  font-weight: 600;
  line-height: 21px;
  text-align: center;
}
.key.first { margin-left: 32px; }
.loc-line {
  position: absolute;
  top: 93px;
  width: 2px;
  height: 1497px;
  background: #8e8e8e;
}
.play-line {
  position: absolute;
  left: 0;
  top: 1553px;
  width: 2px;
  height: 34px;
  background: #7fd6e8;
}
.play-tip {
  position: absolute;
  left: 0;
  top: 1591px;
  width: 0;
  height: 0;
  border-left: 7px solid transparent;
  border-bottom: 8px solid #5cc3d9;
  transform: scaleX(-1);
}
</style>
